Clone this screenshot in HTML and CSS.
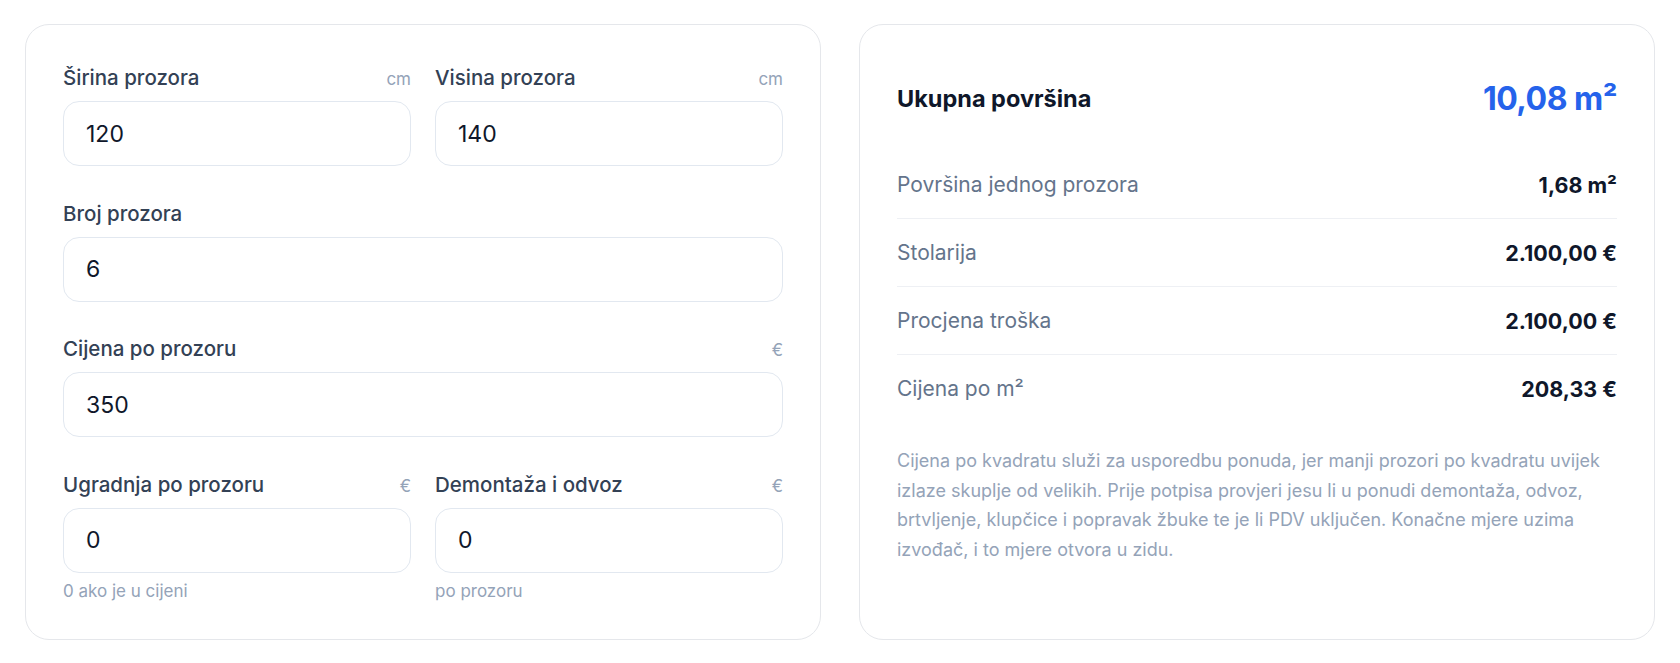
FILE: index.html
```html
<!DOCTYPE html>
<html lang="hr">
<head>
  <meta charset="UTF-8" />
  <meta name="viewport" content="width=device-width, initial-scale=1.0"/>
  <title>Kalkulator prozora</title>
  <link rel="stylesheet" href="styles.css">
</head>
<body>

  <div class="calc">
    <div class="card inputs">
      <div class="row two">
        <div class="field">
          <div class="label-row"><label for="sirina">Širina prozora</label><span class="unit">cm</span></div>
          <input type="text" id="sirina" value="120">
        </div>
        <div class="field">
          <div class="label-row"><label for="visina">Visina prozora</label><span class="unit">cm</span></div>
          <input type="text" id="visina" value="140">
        </div>
      </div>

      <div class="field">
        <div class="label-row"><label for="broj">Broj prozora</label></div>
        <input type="text" id="broj" value="6">
      </div>

      <div class="field">
        <div class="label-row"><label for="cijena">Cijena po prozoru</label><span class="unit">€</span></div>
        <input type="text" id="cijena" value="350">
      </div>

      <div class="row two">
        <div class="field">
          <div class="label-row"><label for="ugradnja">Ugradnja po prozoru</label><span class="unit">€</span></div>
          <input type="text" id="ugradnja" value="0">
          <div class="hint">0 ako je u cijeni</div>
        </div>
        <div class="field">
          <div class="label-row"><label for="demontaza">Demontaža i odvoz</label><span class="unit">€</span></div>
          <input type="text" id="demontaza" value="0">
          <div class="hint">po prozoru</div>
        </div>
      </div>
    </div>

    <div class="card result">
      <div class="total">
        <span class="total-label">Ukupna površina</span>
        <span class="total-value">10,08 m²</span>
      </div>

      <div class="line">
        <span class="line-label">Površina jednog prozora</span>
        <span class="line-value">1,68 m²</span>
      </div>
      <div class="line">
        <span class="line-label">Stolarija</span>
        <span class="line-value">2.100,00 €</span>
      </div>
      <div class="line">
        <span class="line-label">Procjena troška</span>
        <span class="line-value">2.100,00 €</span>
      </div>
      <div class="line last">
        <span class="line-label">Cijena po m²</span>
        <span class="line-value">208,33 €</span>
      </div>

      <p class="note">
        Cijena po kvadratu služi za usporedbu ponuda, jer manji prozori po kvadratu uvijek
        izlaze skuplje od velikih. Prije potpisa provjeri jesu li u ponudi demontaža, odvoz,
        brtvljenje, klupčice i popravak žbuke te je li PDV uključen. Konačne mjere uzima
        izvođač, i to mjere otvora u zidu.
      </p>
    </div>
  </div>

  <div class="actions">
    <div class="action-box"></div>
  </div>

</body>
</html>
```

FILE: styles.css
```css
body {
  font-family: 'Inter', 'Noto Sans', sans-serif;
  background: #ffffff;
  margin: 0;
  color: #0f172a;
}

.calc {
  display: grid;
  grid-template-columns: 1fr 1fr;
  gap: 38px;
  padding: 24px 25px 25px;
}

.card {
  background: #fff;
  border: 1px solid #e5e7eb;
  border-radius: 24px;
  padding: 39px 37px 36px;
}

/* left side: form */
.inputs {
  display: flex;
  flex-direction: column;
  gap: 33.5px;
}

.row.two {
  display: grid;
  grid-template-columns: 1fr 1fr;
  gap: 24px;
}

.label-row {
  display: flex;
  justify-content: space-between;
  align-items: baseline;
  height: 28px;
  margin-bottom: 9px;
}

.label-row label {
  font-size: 20.5px;
  font-weight: 500;
  line-height: 28px;
  color: #334155;
}

.unit {
  font-size: 17px;
  color: #94a3b8;
}

.field input {
  display: block;
  width: 100%;
  box-sizing: border-box;
  height: 65px;
  padding: 0 22px;
  font-family: inherit;
  font-size: 23px;
  color: #0f172a;
  border: 1px solid #e2e8f0;
  border-radius: 16px;
  background: #fff;
  outline: none;
}

.hint {
  margin-top: 6px;
  font-size: 17px;
  line-height: 24px;
  color: #94a3b8;
}

/* right side: results */
.total {
  display: flex;
  justify-content: space-between;
  align-items: center;
  height: 40px;
  margin: 14px 0 33px;
}

.total-label {
  font-size: 23.5px;
  font-weight: 700;
  color: #0f172a;
}

.total-value {
  font-size: 32px;
  font-weight: 700;
  letter-spacing: -0.5px;
  color: #2563eb;
}

.line {
  display: flex;
  justify-content: space-between;
  align-items: center;
  padding: 19.5px 0;
  line-height: 28px;
  border-bottom: 1px solid #eef0f4;
}

.line.last {
  border-bottom: none;
}

.line-label {
  font-size: 21px;
  color: #64748b;
}

.line-value {
  font-size: 21.5px;
  font-weight: 700;
  color: #0f172a;
}

.note {
  margin: 24px 0 0;
  font-size: 18px;
  line-height: 29.5px;
  color: #94a3b8;
}

.actions {
  display: flex;
  justify-content: flex-end;
  padding-right: 35px;
}

.action-box {
  width: 210px;
  height: 0;
  border-top: 1px solid #e5e7eb;
}
```
